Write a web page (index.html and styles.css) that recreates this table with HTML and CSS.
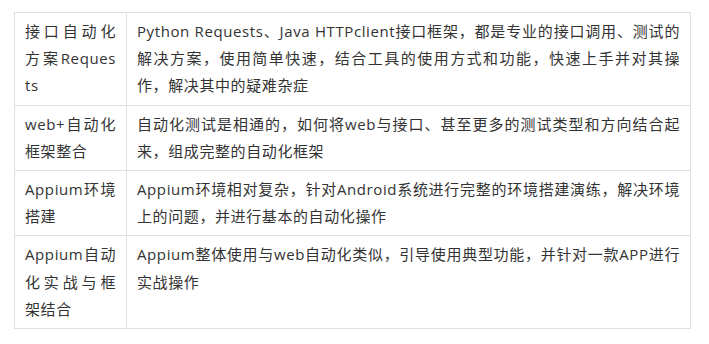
FILE: index.html
```html
<!DOCTYPE html>
<html lang="zh-CN">
<head>
<meta charset="utf-8">
<title>自动化方案</title>
<link rel="stylesheet" href="styles.css">
</head>
<body>
<table class="plan">
  <colgroup>
    <col class="col-name">
    <col class="col-desc">
  </colgroup>
  <tbody>
    <tr>
      <td>接口自动化方案Requests</td>
      <td>Python Requests、Java HTTPclient接口框架，都是专业的接口调用、测试的解决方案，使用简单快速，结合工具的使用方式和功能，快速上手并对其操作，解决其中的疑难杂症</td>
    </tr>
    <tr>
      <td>web+自动化框架整合</td>
      <td>自动化测试是相通的，如何将web与接口、甚至更多的测试类型和方向结合起来，组成完整的自动化框架</td>
    </tr>
    <tr>
      <td>Appium环境搭建</td>
      <td>Appium环境相对复杂，针对Android系统进行完整的环境搭建演练，解决环境上的问题，并进行基本的自动化操作</td>
    </tr>
    <tr>
      <td>Appium自动化实战与框架结合</td>
      <td>Appium整体使用与web自动化类似，引导使用典型功能，并针对一款APP进行实战操作</td>
    </tr>
  </tbody>
</table>
</body>
</html>
```
FILE: styles.css
```css
html, body {
  margin: 0;
  padding: 0;
  background: #ffffff;
}

body {
  padding: 12px 0 0 14px;
}

.plan {
  border-collapse: collapse;
  table-layout: fixed;
  width: 677px;
  font-family: "Open Sans", "Noto Sans CJK SC", sans-serif;
  font-size: 15px;
  letter-spacing: 0.6px;
  line-height: 27.2px;
  color: #333333;
}

.col-name {
  width: 112px;
}

.plan td {
  border: 1px solid #dfdfdf;
  padding: 5px 10px;
  vertical-align: top;
  text-align: justify;
  word-break: break-all;
}
```
